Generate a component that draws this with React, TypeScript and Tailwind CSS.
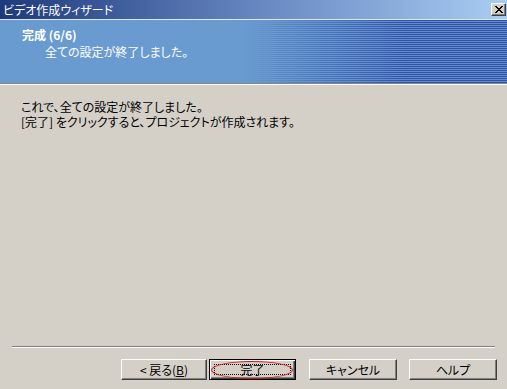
import React from 'react'

const font = "font-['Noto_Sans_CJK_JP','Noto_Sans_CJK_SC',sans-serif] [font-feature-settings:'palt']"

const Button = ({ label, className = '' }: { label: React.ReactNode; className?: string }) => (
    <button
        className={`h-[21px] bg-[#d4d0c8] border border-t-white border-l-white border-b-[#404040] border-r-[#404040] shadow-[inset_-1px_-1px_#808080] text-[12px] leading-none text-black flex items-center justify-center ${className}`}
    >
        {label}
    </button>
)

export default function App() {
    return (
        <div className={`w-[507px] h-[389px] bg-[#d4d0c8] flex flex-col overflow-hidden text-[12px] ${font}`}>
            {/* title bar */}
            <div className="h-[19px] flex items-center justify-between pl-[3px] pr-[1px] bg-gradient-to-r from-[#1f3a7c] via-[#6686c0] to-[#a9cdf3]">
                <span className="text-white leading-none">ビデオ作成ウィザード</span>
                <div className="w-[15px] h-[13px] bg-[#d4d0c8] border border-t-white border-l-white border-b-[#404040] border-r-[#404040] shadow-[inset_-1px_-1px_#808080] flex items-center justify-center">
                    <svg width="8" height="7" viewBox="0 0 8 7" shapeRendering="crispEdges">
                        <path d="M0 0h2v1h-2zM6 0h2v1h-2zM1 1h2v1h-2zM5 1h2v1h-2zM2 2h4v1h-4zM3 3h2v1h-2zM2 4h4v1h-4zM1 5h2v1h-2zM5 5h2v1h-2zM0 6h2v1h-2zM6 6h2v1h-2z" fill="#000" />
                    </svg>
                </div>
            </div>
            <div className="h-px bg-[#dfe8f5]" />

            {/* header band */}
            <div className="relative h-[64px] bg-[#6a9bd0] border-b border-[#7f8a8c]">
                <div className="absolute inset-0 bg-[repeating-linear-gradient(to_bottom,#3150a8_0px,#3150a8_1px,#5f8dcb_1px,#5f8dcb_2px)] [mask-image:linear-gradient(to_right,transparent_48%,black_80%)]" />
                <div className="relative pl-[22px] pt-[7px] text-white leading-[16px]">
                    <div className="font-bold">完成 (6/6)</div>
                    <div className="pl-[23px] mt-[1px]">全ての設定が終了しました。</div>
                </div>
            </div>
            <div className="h-px bg-white" />

            {/* body */}
            <div className="flex-1 pl-[21px] pt-[14px] leading-[15px] text-black">
                <div>これで、全ての設定が終了しました。</div>
                <div>[完了] をクリックすると、プロジェクトが作成されます。</div>
            </div>

            {/* separator */}
            <div className="mx-[12px] w-[483px] border-t border-[#808080] border-b border-b-white" />

            {/* buttons */}
            <div className="flex pt-[11px] pb-[9px] pl-[121px]">
                <Button
                    label={
                        <span>
                            &lt; 戻る(<span className="underline">B</span>)
                        </span>
                    }
                    className="w-[86px]"
                />
                <div className="relative ml-[2px] w-[87px] h-[21px] bg-[#d4d0c8] border border-black shadow-[inset_1px_1px_#fff,inset_-1px_-1px_#404040,inset_-2px_-2px_#808080] flex items-center justify-center">
                    <div className="absolute inset-[4px] border border-dotted border-black" />
                    <div className="absolute left-[1px] right-[2px] top-[1px] bottom-[0px] rounded-[50%] border border-[#e01010]" />
                    <span className="relative text-black leading-none">完了</span>
                </div>
                <Button label="キャンセル" className="ml-[13px] w-[88px]" />
                <Button label="ヘルプ" className="ml-[12px] w-[88px]" />
            </div>
        </div>
    )
}
